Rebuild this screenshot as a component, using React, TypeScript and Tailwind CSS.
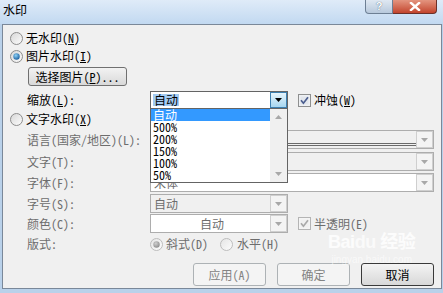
import React from "react";

const FONT = "font-['Noto_Sans_Mono_CJK_SC','Liberation_Sans','Noto_Sans_CJK_SC',sans-serif]";

function Radio({ checked = false, disabled = false }: { checked?: boolean; disabled?: boolean }) {
  const id = `r${checked ? 1 : 0}${disabled ? 1 : 0}`;
  return (
    <svg width="13" height="13" viewBox="0 0 13 13" className="shrink-0">
      <defs>
        <linearGradient id={`${id}o`} x1="0" y1="0" x2="1" y2="1">
          <stop offset="0" stopColor={disabled ? "#e4e4e4" : "#d6d6d6"} />
          <stop offset="1" stopColor="#fdfdfd" />
        </linearGradient>
        <radialGradient id={`${id}i`} cx="0.4" cy="0.35" r="0.7">
          <stop offset="0" stopColor={disabled ? "#d0d0d0" : "#8fd3f8"} />
          <stop offset="1" stopColor={disabled ? "#8a8a8a" : "#165a9b"} />
        </radialGradient>
      </defs>
      <circle cx="6.5" cy="6.5" r="6" fill={`url(#${id}o)`} stroke={disabled ? "#bcbcbc" : "#8c8c8c"} />
      {checked && <circle cx="6.5" cy="6.5" r="3.2" fill={`url(#${id}i)`} />}
    </svg>
  );
}

function Check({ disabled = false }: { disabled?: boolean }) {
  return (
    <svg width="13" height="13" viewBox="0 0 13 13" className="shrink-0">
      <rect x="0.5" y="0.5" width="12" height="12" fill={disabled ? "#f4f4f4" : "#eef0f3"} stroke={disabled ? "#b4b4b4" : "#8e8f8f"} />
      <rect x="2.5" y="2.5" width="8" height="8" fill={disabled ? "#f0f0f0" : "#e2e6ec"} />
      <path d="M3 6.3 L5.4 9.2 L10 3.2" fill="none" stroke={disabled ? "#a9a9a9" : "#4b5e8f"} strokeWidth="1.7" />
    </svg>
  );
}

function Arrow({ color }: { color: string }) {
  return (
    <svg width="7" height="4" viewBox="0 0 7 4">
      <path d="M0 0 H7 L3.5 4 Z" fill={color} />
    </svg>
  );
}

function Combo({
  w, value, center = false, white = false,
}: { w: string; value?: string; center?: boolean; white?: boolean }) {
  return (
    <div className={`${w} h-[19px] border border-[#adadad] flex ${white ? "bg-white" : "bg-[#f0f0f0]"}`}>
      <div className={`flex-1 flex items-center text-[12px] text-[#6d6d6d] pl-[3px] ${center ? "justify-center" : ""}`}>
        {value}
      </div>
      <div className="w-[17px] border border-[#cfcfcf] bg-[#f4f4f4] flex items-center justify-center">
        <Arrow color="#a8a8a8" />
      </div>
    </div>
  );
}

function Btn({ label, disabled = false, focus = false }: { label: React.ReactNode; disabled?: boolean; focus?: boolean }) {
  return (
    <div
      className={`w-[73px] h-[23px] rounded-[3px] flex items-center justify-center text-[12px] border ${
        disabled
          ? "border-[#adb2b5] bg-[#f4f4f4] text-[#838383]"
          : focus
          ? "border-[#3a3a3a] bg-gradient-to-b from-[#f4f4f4] to-[#d8d8d8] text-black"
          : "border-[#707070] bg-gradient-to-b from-[#f2f2f2] to-[#d6d6d6] text-black"
      }`}
    >
      {label}
    </div>
  );
}

export default function App() {
  const gray = "text-[#6d6d6d]";
  return (
    <div className={`relative w-[443px] h-[293px] overflow-hidden bg-[#b9d1ea] ${FONT} text-[12px] leading-none text-black`}>
      {/* Title bar */}
      <div className="h-[24px] flex justify-between bg-gradient-to-b from-[#dfebf8] to-[#c2d9f1]">
        <div className="pl-[3px] pt-[4px] text-[12px]">水印</div>
        <div className="flex pr-[6px]">
          <div className="w-[28px] h-[14px] rounded-bl-[4px] border border-t-0 border-[#6d7f94] bg-gradient-to-b from-[#dfe8f2] to-[#b8c9dc] flex items-center justify-center font-['Liberation_Sans',sans-serif] text-[11px] leading-none font-bold text-white [text-shadow:0_0_1px_#2f4560]">
            ?
          </div>
          <div className="w-[44px] h-[14px] rounded-br-[4px] border border-t-0 border-l-0 border-[#6b3029] bg-gradient-to-b from-[#e3947f] to-[#c2432c] flex items-center justify-center">
            <svg width="12" height="9" viewBox="0 0 12 9">
              <path d="M2 1 L10 8 M10 1 L2 8" stroke="#fff" strokeWidth="2.4" strokeLinecap="square" />
            </svg>
          </div>
        </div>
      </div>

      {/* Client panel */}
      <div className="ml-[2px] w-[440px] h-[265px] border border-[#7a8899] bg-[#f0f0f0] flex flex-col">
        <div className="mt-[4px] h-[18px] flex items-center gap-[3px] pl-[7px]">
          <Radio />
          <span>无水印(<u>N</u>)</span>
        </div>
        <div className="h-[18px] flex items-center gap-[3px] pl-[7px]">
          <Radio checked />
          <span>图片水印(<u>I</u>)</span>
        </div>
        <div className="mt-[2px] h-[19px] flex pl-[25px]">
          <div className="w-[99px] h-[19px] rounded-[3px] border border-[#707070] bg-gradient-to-b from-[#f2f2f2] to-[#d9d9d9] flex items-center justify-center">
            选择图片(<u>P</u>)...
          </div>
        </div>
        <div className="mt-[5px] h-[18px] flex items-center">
          <div className="w-[147px] pl-[24px]">缩放(<u>L</u>):</div>
          <div className="w-[138px] h-[18px] border border-[#646464] bg-white flex">
            <div className="flex-1 flex items-center pl-[2px]">
              <span className="bg-[#a3cbf3] px-[1px]">自动</span>
            </div>
            <div className="w-[17px] border border-[#3c7fb1] bg-gradient-to-b from-[#e5f4fc] to-[#a6d6f0] flex items-center justify-center">
              <Arrow color="#000" />
            </div>
          </div>
          <div className="ml-[10px] flex items-center gap-[3px]">
            <Check />
            <span>冲蚀(<u>W</u>)</span>
          </div>
        </div>
        <div className="mt-[1px] h-[18px] flex items-center gap-[3px] pl-[7px]">
          <Radio />
          <span>文字水印(<u>X</u>)</span>
        </div>
        <div className="mt-[2px] h-[19px] flex items-center">
          <div className={`w-[147px] pl-[24px] ${gray}`}>语言(国家/地区)(L):</div>
          <div className="relative">
            <Combo w="w-[284px]" />
            <div className="absolute left-[138px] top-[13px] w-[128px] h-[3px] border-y border-[#6a6a6a]" />
          </div>
        </div>
        <div className="mt-[3px] h-[19px] flex items-center">
          <div className={`w-[147px] pl-[24px] ${gray}`}>文字(T):</div>
          <Combo w="w-[284px]" />
        </div>
        <div className="mt-[2px] h-[19px] flex items-center">
          <div className={`w-[147px] pl-[24px] ${gray}`}>字体(F):</div>
          <Combo w="w-[284px]" value="宋体" white />
        </div>
        <div className="mt-[2px] h-[19px] flex items-center">
          <div className={`w-[147px] pl-[24px] ${gray}`}>字号(S):</div>
          <Combo w="w-[138px]" value="自动" />
        </div>
        <div className="mt-[1px] h-[19px] flex items-center">
          <div className={`w-[147px] pl-[24px] ${gray}`}>颜色(C):</div>
          <Combo w="w-[138px]" value="自动" center white />
          <div className={`ml-[10px] flex items-center gap-[3px] ${gray}`}>
            <Check disabled />
            <span>半透明(E)</span>
          </div>
        </div>
        <div className={`mt-[2px] h-[18px] flex items-center ${gray}`}>
          <div className="w-[147px] pl-[24px]">版式:</div>
          <div className="w-[70px] flex items-center gap-[3px]">
            <Radio checked disabled />
            <span>斜式(D)</span>
          </div>
          <div className="flex items-center gap-[4px]">
            <Radio disabled />
            <span>水平(H)</span>
          </div>
        </div>
        <div className="mt-[10px] flex justify-end gap-[11px] pr-[7px]">
          <Btn label="应用(A)" disabled />
          <Btn label="确定" disabled />
          <Btn label="取消" focus />
        </div>
      </div>

      {/* Baidu watermark */}
      <div className="absolute left-[328px] top-[233px] flex flex-col items-center text-white/80 pointer-events-none font-['Liberation_Sans','Noto_Sans_CJK_SC',sans-serif]">
        <div className="text-[18px] font-bold tracking-tight">Bai<span className="text-white/70">du</span> 经验</div>
        <div className="text-[10px] mt-[4px] text-white/60">jingyan.baidu.com</div>
      </div>

      {/* Open drop-down list */}
      <div className="absolute left-[150px] top-[108px] w-[138px] h-[75px] border border-[#646464] bg-white flex">
        <div className="flex-1 flex flex-col">
          <div className="h-[12px] bg-[#3399ff] text-white flex items-center pl-[2px]">自动</div>
          {["500%", "200%", "150%", "100%", "50%"].map((v) => (
            <div key={v} className="h-[12px] flex items-center pl-[2px]">{v}</div>
          ))}
        </div>
        <div className="w-[17px] bg-[#f0f0f0] flex flex-col justify-between items-center py-[6px]">
          <svg width="7" height="4" viewBox="0 0 7 4"><path d="M0 4 H7 L3.5 0 Z" fill="#a8a8a8" /></svg>
          <Arrow color="#a8a8a8" />
        </div>
      </div>
    </div>
  );
}
